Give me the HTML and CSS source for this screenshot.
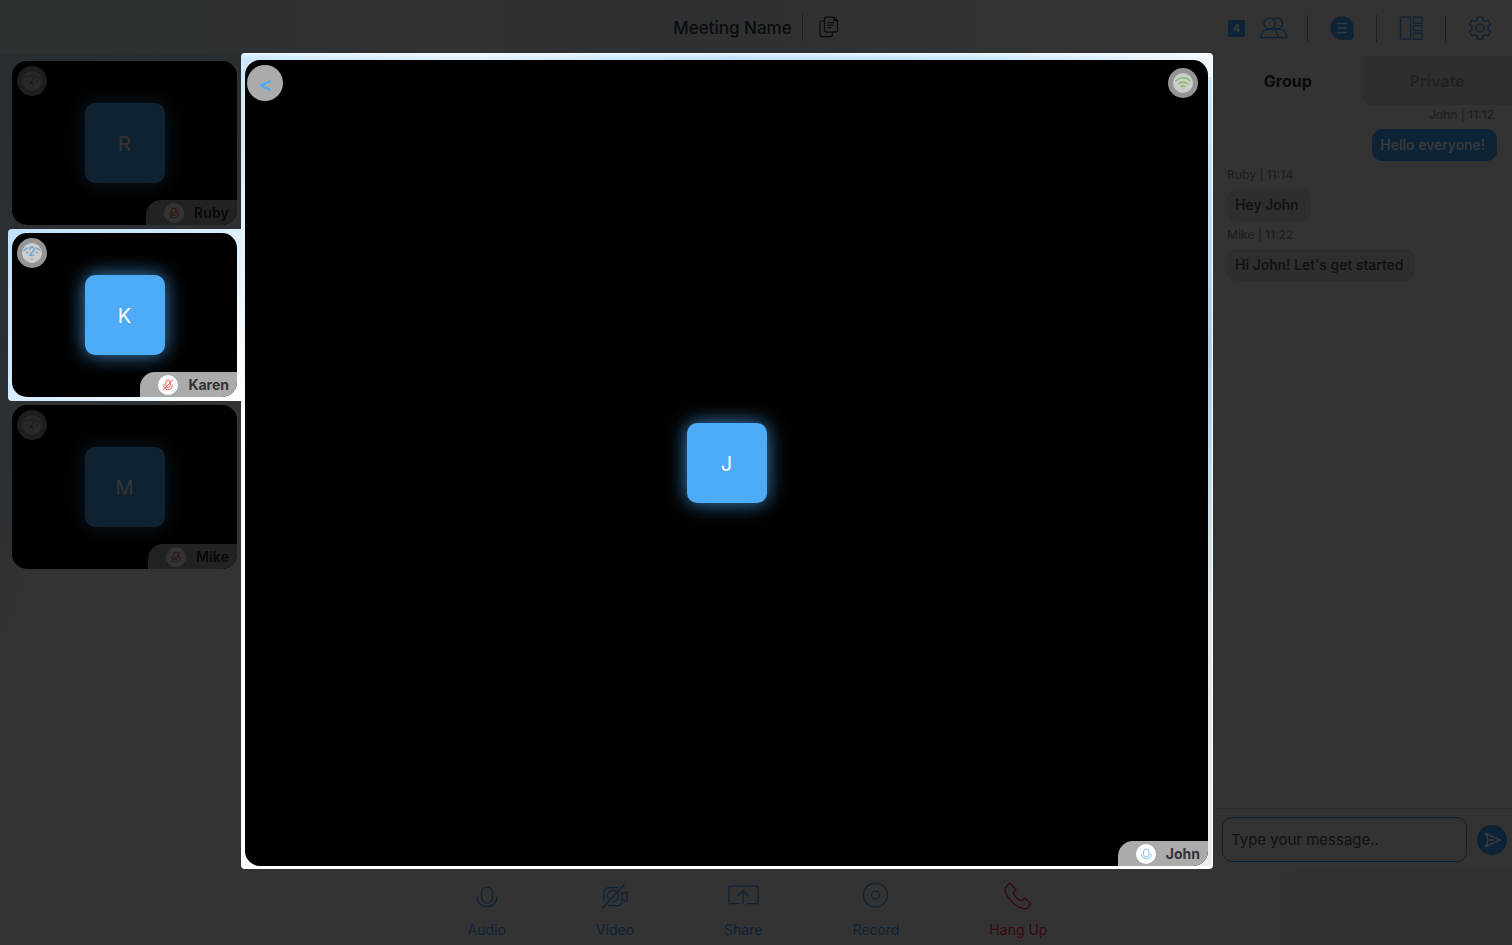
FILE: index.html
```html
<!DOCTYPE html>
<html lang="en">
<head>
<meta charset="utf-8">
<meta name="viewport" content="width=device-width, initial-scale=1">
<title>Meeting Name</title>
<link rel="stylesheet" href="styles.css">
</head>
<body>
<svg class="sprite" aria-hidden="true">
  <symbol id="mic" viewBox="0 0 24 24"><rect x="7" y="2" width="11" height="16" rx="5.500"/><path d="M2.500 11.500v1c0 5.500 4 9 10 9s10-3.500 10-9v-1"/></symbol>
  <symbol id="mic-off" viewBox="0 0 24 24"><rect x="7.500" y="2" width="9" height="15" rx="4.500"/><path d="M3.500 11v2c0 5 3.500 8.500 8.500 8.500s8.500-3.500 8.500-8.500v-2M22 1 2 23"/></symbol>
  <symbol id="wifi" viewBox="0 0 24 24"><path d="M2 9.500C8 3.500 16 3.500 22 9.500M5.500 13.500c3.500-3.600 9.500-3.600 13 0M9 17c2-1.700 4-1.700 6 0M11.500 20h1"/></symbol>
  <symbol id="wifi-unknown" viewBox="0 0 24 24"><path d="M1 9c2-2.500 4-3.500 6-4M17 5c2 .5 4 1.500 6 4M4.500 12.500l2.500-2M17 10.500l2.500 2M9 7.500c0-4.500 6-4.500 6-.5 0 2.500-3.500 4-6 8h6M11 20h2"/></symbol>
</svg>

<header class="topbar">
  <div class="title-group">
    <h1 class="title">Meeting Name</h1>
    <button class="icon-btn copy" aria-label="Copy meeting details">
      <svg width="20" height="22" viewBox="0 0 20 22"><path d="M5.500 5H3a2 2 0 0 0-2 2v11.500a2 2 0 0 0 2 2h8.500a2 2 0 0 0 2-2V16.500"/><path d="M7.500 1h7.500l3.500 3.500V14a2 2 0 0 1-2 2h-9a2 2 0 0 1-2-2V3a2 2 0 0 1 2-2zM15 1v3.500h3.500M8.500 6.500h6.500M8.500 9h6M8.500 11.500h4"/></svg>
    </button>
  </div>
  <nav class="tools" aria-label="Meeting tools">
    <button class="icon-btn people" aria-label="Participants">
      <span class="badge">4</span>
      <svg width="28" height="22" viewBox="0 0 28 22"><circle cx="9.500" cy="6.500" r="5.500"/><path d="M13.500 2.300a5.500 5.500 0 1 1 0 8.400M1 20.500c0-5 3.500-8.500 8.500-8.500s8.500 3.500 8.500 8.500zM18 20.500h9c0-5-3.500-8.500-8.500-8.500-2 0-3.700.6-5 1.600"/></svg>
    </button>
    <button class="icon-btn chat-toggle" aria-label="Chat">
      <svg width="24" height="24" viewBox="0 0 24 24"><path class="solid" d="M12 1c6.100 0 11 4.900 11 11v8.500a2.500 2.500 0 0 1-2.500 2.500H12A11 11 0 0 1 12 1z"/><path class="lines" d="M7 7.500h10M7 12h10M7 16.500h10"/></svg>
    </button>
    <button class="icon-btn" aria-label="Layout">
      <svg width="24" height="24" viewBox="0 0 24 24"><path d="M1.500 1h10v22h-10zM14.500 1h8.500v6h-8.500zM14.500 9.500h8.500v5h-8.500zM14.500 17h8.500v6h-8.500z"/></svg>
    </button>
    <button class="icon-btn" aria-label="Settings">
      <svg width="24" height="24" viewBox="0 0 24 24"><path d="M9.700 1h4.600l.7 3.200 2 1.100 3.200-1 2.300 4-2.500 2.300v2.800l2.500 2.300-2.300 4-3.200-1-2 1.100-.7 3.200H9.700L9 19.800l-2-1.100-3.200 1-2.300-4L4 13.400v-2.800L1.500 8.300l2.300-4 3.200 1 2-1.100z"/><circle cx="12" cy="12" r="3.800"/></svg>
    </button>
  </nav>
</header>

<main class="stage">
  <aside class="filmstrip" aria-label="Participants">
    <div class="cell">
      <article class="tile is-dimmed">
        <span class="signal"><svg><use href="#wifi-unknown"/></svg></span>
        <span class="avatar">R</span>
        <span class="nametag"><span class="mic muted"><svg><use href="#mic-off"/></svg></span>Ruby</span>
      </article>
    </div>
    <div class="cell cell-lit">
      <article class="tile">
        <span class="signal"><svg><use href="#wifi-unknown"/></svg></span>
        <span class="avatar">K</span>
        <span class="nametag"><span class="mic muted"><svg><use href="#mic-off"/></svg></span>Karen</span>
      </article>
    </div>
    <div class="cell">
      <article class="tile is-dimmed">
        <span class="signal"><svg><use href="#wifi-unknown"/></svg></span>
        <span class="avatar">M</span>
        <span class="nametag"><span class="mic muted"><svg><use href="#mic-off"/></svg></span>Mike</span>
      </article>
    </div>
  </aside>

  <section class="spotlight" aria-label="Active speaker">
    <article class="tile tile-main">
      <button class="back" aria-label="Back">&lt;</button>
      <span class="signal good"><svg><use href="#wifi"/></svg></span>
      <span class="avatar">J</span>
      <span class="nametag"><span class="mic"><svg><use href="#mic"/></svg></span>John</span>
    </article>
  </section>

  <section class="chat" aria-label="Chat">
    <div class="tabs" role="tablist">
      <button class="tab active" role="tab" aria-selected="true">Group</button>
      <button class="tab" role="tab" aria-selected="false">Private</button>
    </div>
    <div class="messages">
      <p class="meta mine">John | 11:12</p>
      <p class="bubble mine">Hello everyone!</p>
      <p class="meta">Ruby | 11:14</p>
      <p class="bubble">Hey John</p>
      <p class="meta">Mike | 11:22</p>
      <p class="bubble">Hi John! Let's get started</p>
    </div>
    <form class="composer">
      <input class="message-input" type="text" placeholder="Type your message.." aria-label="Message">
      <button class="send" type="button" aria-label="Send message">
        <svg width="30" height="30" viewBox="0 0 30 30"><path d="M9 8.500 23 15 9 21.500l2-6.500zM11 15h6"/></svg>
      </button>
    </form>
  </section>
</main>

<footer class="controls">
  <button class="control"><svg width="28" height="28" viewBox="0 0 28 28"><rect x="8.500" y="5" width="11" height="16" rx="5.500"/><path d="M4 14.500c0 6 4 10 10 10s10-4 10-10"/></svg>Audio</button>
  <button class="control"><svg width="28" height="28" viewBox="0 0 28 28"><path d="M17.500 5.500H8a5 5 0 0 0-5 5v9M7 23.500h10a4 4 0 0 0 4-4V8.500M15.500 9.500a5.500 5.500 0 0 0-7.500 8M11 19.500a5.500 5.500 0 0 0 6-8M21 12.500 26 9.500v10L21 17M23.500 2.500 1 26.500"/></svg>Video</button>
  <button class="control"><svg width="32" height="28" viewBox="0 0 32 28"><path d="M12 21.500H2V4h29v17.500H20M16 22V9M10.500 14 16 8.500l5.500 5.500"/></svg>Share</button>
  <button class="control"><svg width="28" height="28" viewBox="0 0 28 28"><circle cx="13.500" cy="13" r="12"/><circle cx="13.500" cy="13" r="4"/></svg>Record</button>
  <button class="control hangup"><svg width="28" height="28" viewBox="0 0 28 28"><path d="M6 1 1.800 5.200C0 8 2.500 14.500 8 20s12 8 15 6.200L27 22l-6-5.800-3.700 2.800c-3.300-1-6.800-4.500-7.800-7.800L12 7.500z"/></svg>Hang Up</button>
</footer>
</body>
</html>
```
FILE: styles.css
```css
:root {
  --accent: #4dabf7;
  --accent-dim: #0f2336;
  --surface: #333333;
  --ink-dim: #0c0c0d;
}

* { box-sizing: border-box; }

body {
  margin: 0;
  min-height: 100vh;
  display: flex;
  flex-direction: column;
  font-family: Inter, Roboto, "Liberation Sans", sans-serif;
  background: linear-gradient(#303335 0, #303233 60px, #333333 420px);
}

button {
  padding: 0;
  border: 0;
  background: none;
  font: inherit;
  color: inherit;
}

svg {
  display: block;
  fill: none;
  stroke: currentColor;
  stroke-width: 1.25;
}

.sprite { position: absolute; width: 0; height: 0; }

/* Top bar */
.topbar {
  height: 53px;
  display: grid;
  grid-template-columns: 1fr auto 1fr;
  align-items: center;
  padding: 2px 20px 0;
  background: linear-gradient(90deg, #2c3134, #2f3235 28%, #2d3133 45%, #303334 65%, #333333 85%);
}

.title-group {
  grid-column: 2;
  display: flex;
  align-items: center;
  color: var(--ink-dim);
}

.title {
  margin: 0;
  padding-right: 10px;
  font-size: 17px;
  line-height: 26px;
  font-weight: 500;
}

.copy {
  padding: 1px 0 3px 16px;
  border-left: 1px solid #1f2224;
}

.tools {
  display: flex;
  justify-content: flex-end;
  padding-top: 1px;
  color: var(--accent-dim);
}

.icon-btn { min-height: 27px; display: flex; align-items: center; }

.tools .icon-btn + .icon-btn {
  margin-left: 22px;
  padding-left: 22px;
  border-left: 1px solid #1f2022;
}

.tools .people + .chat-toggle { margin-left: 19px; }

.people { gap: 15px; }

.badge {
  width: 17px;
  height: 17px;
  border-radius: 2px;
  background: var(--accent-dim);
  color: #3c3f42;
  font-size: 11px;
  line-height: 17px;
  font-weight: 600;
}

.solid { fill: currentColor; }
.lines { stroke: #383a3c; stroke-width: 1.5; }

/* Stage */
.stage {
  flex: 1;
  display: flex;
}

.filmstrip {
  flex: none;
  width: 241px;
  padding: 4px 0 0 8px;
  background:
    radial-gradient(ellipse 50px 380px at 0 300px, #2a2f33, rgba(42, 47, 51, 0)),
    linear-gradient(160deg, #282d30, #2e3133 30%, #333333 55%);
}

.cell { padding: 4px; }

.cell-lit {
  border-radius: 4px 0 0 4px;
  background: linear-gradient(140deg, #bfe2fb, #cfe8fc 35%, #e3f2fd 65%, #ffffff 90%);
}

.tile {
  position: relative;
  aspect-ratio: 225 / 164;
  display: flex;
  align-items: center;
  justify-content: center;
  border-radius: 15px;
  overflow: hidden;
  background: #000000;
}

.is-dimmed { filter: brightness(0.2); }

.spotlight {
  flex: 1;
  display: flex;
  padding: 7px 5px 3px 4px;
  border-radius: 4px;
  background:
    linear-gradient(rgba(255, 255, 255, 0.7), rgba(255, 255, 255, 0) 5px),
    linear-gradient(90deg, #cde8fd 0, #e3f1fd 25%, #bfe0fb 50%, #cbe6fc 75%, #eff7fd) top / 100% 24px no-repeat,
    linear-gradient(#cde8fd 0, #e3f1fd 170px, #ffffff 350px) left / 50% 100% no-repeat,
    linear-gradient(#d5eafa 0, #a9cfe8 300px, #dfe7ec 550px, #ececec) right / 50% 100% no-repeat;
  box-shadow: inset -1px -3px 0 #ffffff;
}

.tile-main { flex: 1; aspect-ratio: auto; }

.avatar {
  width: 80px;
  height: 80px;
  border-radius: 10px;
  background: var(--accent);
  box-shadow: 0 0 20px rgba(77, 171, 247, 0.8);
  color: #ffffff;
  font-size: 20px;
  line-height: 82px;
  text-align: center;
}

.signal {
  position: absolute;
  top: 5px;
  left: 5px;
  width: 30px;
  height: 30px;
  padding: 1px;
  border: 5px solid #949494;
  border-radius: 50%;
  background: #cccccc;
  color: #4a9ad8;
}

.signal svg { width: 18px; height: 18px; stroke-width: 1.5; }

.signal.good {
  top: 8px;
  right: 10px;
  left: auto;
  color: #6abf47;
}

.back {
  position: absolute;
  top: 5px;
  left: 2px;
  width: 36px;
  height: 36px;
  border-radius: 50%;
  background: #ababab;
  color: var(--accent);
  font-size: 20px;
  line-height: 38px;
  font-weight: 600;
}

.nametag {
  position: absolute;
  right: 0;
  bottom: 0;
  height: 25px;
  display: flex;
  align-items: center;
  gap: 10px;
  padding: 0 8px 0 18px;
  border-top-left-radius: 15px;
  background: #ababab;
  color: #333333;
  font-size: 14px;
  font-weight: 700;
}

.mic {
  width: 20px;
  height: 20px;
  padding: 4px;
  border-radius: 50%;
  background: #ffffff;
  color: #7cc0f5;
}

.mic.muted { color: #ee5a4f; }
.mic svg { width: 12px; height: 12px; stroke-width: 2; }

/* Chat */
.chat {
  flex: none;
  width: 299px;
  margin-top: 3px;
  display: flex;
  flex-direction: column;
  background: var(--surface);
}

.tabs { display: flex; }

.tab {
  flex: 1;
  height: 49px;
  color: #0a0a0a;
  font-size: 16px;
  font-weight: 700;
}

.tab:not(.active) {
  border-bottom-left-radius: 8px;
  background: #2e2e2e;
  color: #222222;
}

.messages {
  flex: 1;
  display: flex;
  flex-direction: column;
  align-items: flex-start;
  padding: 0 15px 0 14px;
}

.messages .mine { align-self: flex-end; }

.meta {
  margin: 6px 0;
  color: #202020;
  font-size: 12px;
  line-height: 16px;
  font-weight: 500;
}

.meta:first-child { margin-top: 2px; }
.meta.mine { padding-right: 3px; }

.bubble {
  margin: 0;
  padding: 6px 12px 6px 8px;
  border-radius: 10px;
  background: #2e2e2e;
  color: #101010;
  font-size: 14px;
  line-height: 20px;
  font-weight: 500;
}

.bubble.mine {
  background: var(--accent-dim);
  color: #3a3c3e;
}

.composer {
  display: flex;
  align-items: center;
  gap: 10px;
  padding: 8px 5px 7px 9px;
  border-top: 1px solid #2a2c2d;
}

.message-input {
  flex: 1;
  min-width: 0;
  height: 45px;
  padding: 0 8px;
  border: 1px solid var(--accent-dim);
  border-radius: 10px;
  background: transparent;
  color: #111111;
  font: 400 15px Inter, Roboto, sans-serif;
}

.message-input::placeholder { color: #111111; opacity: 1; }

.send {
  width: 30px;
  height: 30px;
  border-radius: 50%;
  background: var(--accent-dim);
  color: #3a3c3e;
}

.send svg { stroke-width: 1.5; }

/* Call controls */
.controls {
  height: 76px;
  display: flex;
  justify-content: center;
  gap: 90px;
  padding: 13px 0 0 3px;
  background: linear-gradient(90deg, #303234 0, #333333 10%, #333333 78%, #303133 90%);
}

.control {
  display: flex;
  flex-direction: column;
  align-items: center;
  align-self: flex-start;
  gap: 10px;
  color: var(--accent-dim);
  font-size: 14px;
  line-height: 20px;
}

.hangup { color: #3a0810; }
```
